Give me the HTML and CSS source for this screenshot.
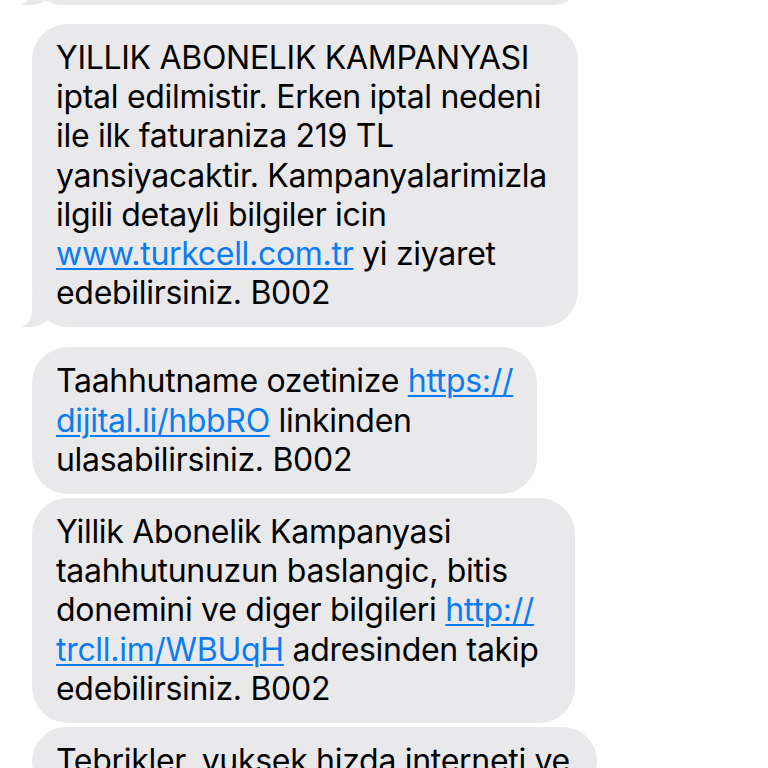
FILE: index.html
```html
<!DOCTYPE html>
<html lang="tr">
<head>
<meta charset="utf-8">
<title>Mesajlar</title>
<link rel="stylesheet" href="styles.css">
</head>
<body>
<div class="thread">
  <div class="bubble tail w-top top-cut"></div>
  <div class="bubble tail w1">
    <span class="line">YILLIK ABONELIK KAMPANYASI</span>
    <span class="line">iptal edilmistir. Erken iptal nedeni</span>
    <span class="line">ile ilk faturaniza 219 TL</span>
    <span class="line">yansiyacaktir. Kampanyalarimizla</span>
    <span class="line">ilgili detayli bilgiler icin</span>
    <span class="line"><a class="link" href="#">www.turkcell.com.tr</a> yi ziyaret</span>
    <span class="line">edebilirsiniz. B002</span>
  </div>
  <div class="bubble w2 gap-lg">
    <span class="line">Taahhutname ozetinize <a class="link" href="#">https://</a></span>
    <span class="line"><a class="link" href="#">dijital.li/hbbRO</a> linkinden</span>
    <span class="line">ulasabilirsiniz. B002</span>
  </div>
  <div class="bubble w3">
    <span class="line">Yillik Abonelik Kampanyasi</span>
    <span class="line">taahhutunuzun baslangic, bitis</span>
    <span class="line">donemini ve diger bilgileri <a class="link" href="#">http://</a></span>
    <span class="line"><a class="link" href="#">trcll.im/WBUqH</a> adresinden takip</span>
    <span class="line">edebilirsiniz. B002</span>
  </div>
  <div class="bubble w4">
    <span class="line">Tebrikler, yuksek hizda interneti ve</span>
  </div>
</div>
</body>
</html>
```
FILE: styles.css
```css
html, body {
  margin: 0;
  padding: 0;
  background: #ffffff;
}
body {
  font-family: "Inter", "Noto Sans", sans-serif;
  color: #000000;
  overflow: hidden;
  height: 768px;
}
.thread {
  display: flex;
  flex-direction: column;
  align-items: flex-start;
  gap: 4px;
  padding-left: 32px;
}
.bubble {
  position: relative;
  box-sizing: border-box;
  background: #e9e9eb;
  border-radius: 36px;
  padding: 14px 0 15px 24px;
  font-size: 32px;
  line-height: 39.2px;
  letter-spacing: -0.3px;
  white-space: nowrap;
}
.line { display: block; }
.top-cut {
  height: 60px;
  margin-top: -55px;
  margin-bottom: 15px;
}
.w-top { width: 551px; }
.w1 { width: 546px; }
.w2 { width: 505px; }
.w3 { width: 543px; }
.w4 { width: 565px; }
.gap-lg { margin-top: 16px; }
.link {
  color: #0a7cf5;
  text-decoration: underline;
  text-decoration-thickness: 2px;
  text-underline-offset: 3px;
}
.tail::before {
  content: "";
  position: absolute;
  bottom: 0;
  left: -11px;
  width: 34px;
  height: 30px;
  background: #e9e9eb;
  border-bottom-right-radius: 24px 22px;
}
.tail::after {
  content: "";
  position: absolute;
  bottom: 0;
  left: -30px;
  width: 30px;
  height: 31px;
  background: #ffffff;
  border-bottom-right-radius: 14px 16px;
}
```
